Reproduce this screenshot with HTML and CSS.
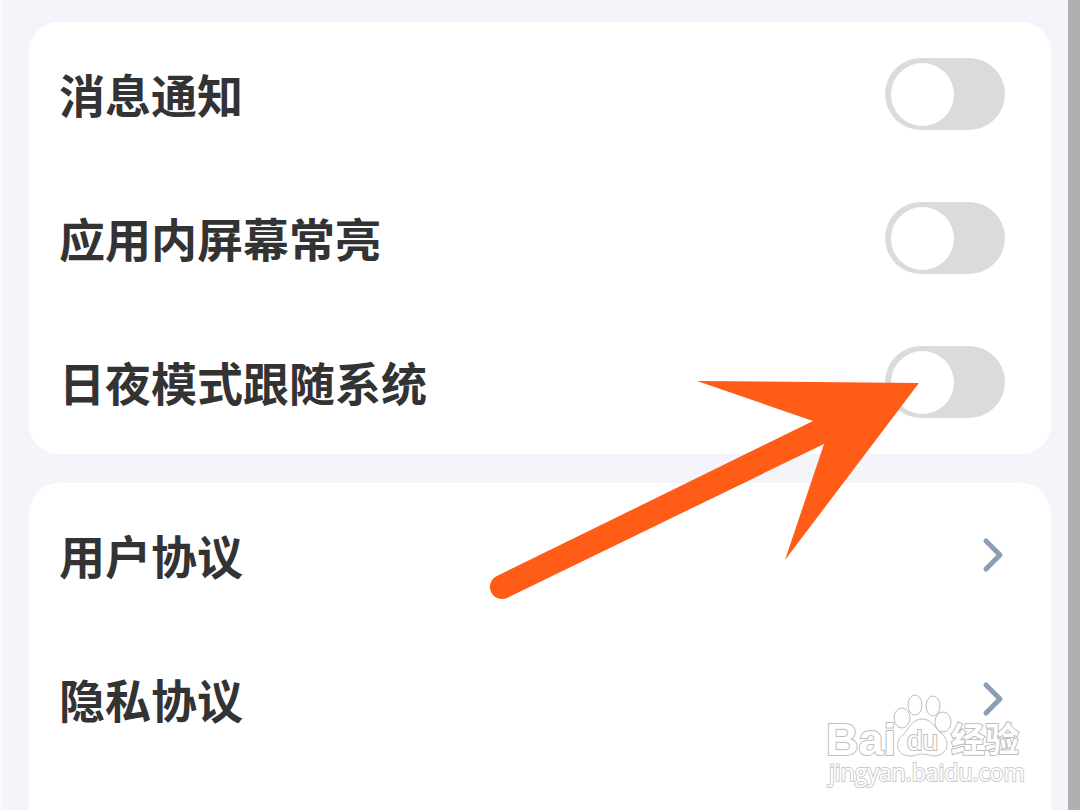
FILE: index.html
```html
<!DOCTYPE html>
<html lang="zh-CN">
<head>
<meta charset="utf-8">
<meta name="viewport" content="width=device-width, initial-scale=1">
<title>设置</title>
<link rel="stylesheet" href="styles.css">
</head>
<body>
<main class="settings">
  <section class="card">
    <div class="row">
      <label for="notify">消息通知</label>
      <input class="switch" type="checkbox" role="switch" id="notify">
    </div>
    <div class="row">
      <label for="awake">应用内屏幕常亮</label>
      <input class="switch" type="checkbox" role="switch" id="awake">
    </div>
    <div class="row">
      <label for="theme">日夜模式跟随系统</label>
      <input class="switch" type="checkbox" role="switch" id="theme">
    </div>
  </section>
  <nav class="card card-last">
    <a class="row" href="#terms"><span>用户协议</span>
      <svg class="chevron" viewBox="0 0 24 36" aria-hidden="true"><path d="M5 4 19 18 5 32"/></svg>
    </a>
    <a class="row" href="#privacy"><span>隐私协议</span>
      <svg class="chevron" viewBox="0 0 24 36" aria-hidden="true"><path d="M5 4 19 18 5 32"/></svg>
    </a>
  </nav>
</main>
<svg class="arrow" viewBox="0 0 432 220" aria-hidden="true">
  <path d="M432 3 210 1 326 41 10 196A12 12 0 0 0 20 218L337 64 298 180Z"/>
</svg>
<svg class="watermark" viewBox="0 0 206 100" role="img" aria-label="Baidu 经验">
  <text class="brand" x="2" y="65">Bai</text>
  <g class="paw">
    <ellipse cx="78" cy="28" rx="8" ry="10"/>
    <ellipse cx="91" cy="15" rx="7" ry="10"/>
    <ellipse cx="109" cy="16" rx="7" ry="10"/>
    <ellipse cx="119" cy="32" rx="8" ry="10"/>
    <path d="M98 29C88 29 85 39 79 45C70 51 72 66 86 66C92 66 93 64 98 64C104 64 106 66 111 66C124 65 127 51 117 43C110 37 108 29 98 29Z"/>
  </g>
  <text class="du" x="83" y="60">du</text>
  <text class="exp" x="127" y="62">经验</text>
  <text class="site" x="5" y="91">jingyan.baidu.com</text>
</svg>
</body>
</html>
```
FILE: styles.css
```css
* {
  box-sizing: border-box;
}

body {
  margin: 0;
  min-height: 100vh;
  display: flex;
  position: relative;
  overflow: hidden;
  background: #f3f5fa;
  border-left: 2px solid #f9fafc;
  border-right: 12px solid #afb1b0;
  color: #333;
  font-family: "Noto Sans CJK SC", sans-serif;
}

.settings {
  flex: 1;
  display: flex;
  flex-direction: column;
  gap: 29px;
  padding: 22px 17px 0 27px;
}

.card {
  background: #fff;
  border-radius: 30px;
}

.card-last {
  flex: 1;
  border-radius: 30px 30px 0 0;
}

.row {
  display: flex;
  align-items: center;
  justify-content: space-between;
  height: 144px;
  padding: 0 46px 0 30px;
  color: inherit;
  font-size: 46px;
  font-weight: 700;
  text-decoration: none;
}

.row label,
.row span {
  padding-bottom: 2px;
}

.switch {
  appearance: none;
  display: flex;
  align-items: center;
  width: 120px;
  height: 72px;
  margin: 0;
  padding: 0 6px;
  border-radius: 36px;
  background: #dbdbdb;
}

.switch::before {
  content: "";
  width: 63px;
  height: 63px;
  border-radius: 50%;
  background: #fff;
}

.switch:checked {
  justify-content: flex-end;
  background: #ff5c17;
}

.chevron {
  width: 24px;
  height: 36px;
  fill: none;
  stroke: #8c9fb2;
  stroke-width: 5;
  stroke-linecap: round;
  stroke-linejoin: round;
}

.arrow {
  position: absolute;
  left: 485px;
  top: 380px;
  width: 432px;
  height: 220px;
  fill: #ff5c17;
  pointer-events: none;
}

.watermark {
  position: absolute;
  right: 38px;
  bottom: 20px;
  width: 206px;
  height: 100px;
  pointer-events: none;
  fill: #fff;
  stroke: #bdbdbd;
  stroke-width: 1;
  font-family: "Liberation Sans", sans-serif;
}

.watermark text {
  paint-order: stroke;
  stroke-width: 2;
}

.watermark .brand {
  font-size: 45px;
  font-weight: 700;
}

.watermark .du {
  font-size: 28px;
}

.watermark .exp {
  font-family: "Noto Sans CJK SC", sans-serif;
  font-size: 34px;
  font-weight: 700;
}

.watermark .site {
  font-family: "Open Sans", sans-serif;
  font-size: 23px;
  stroke: #ccc;
}
```
